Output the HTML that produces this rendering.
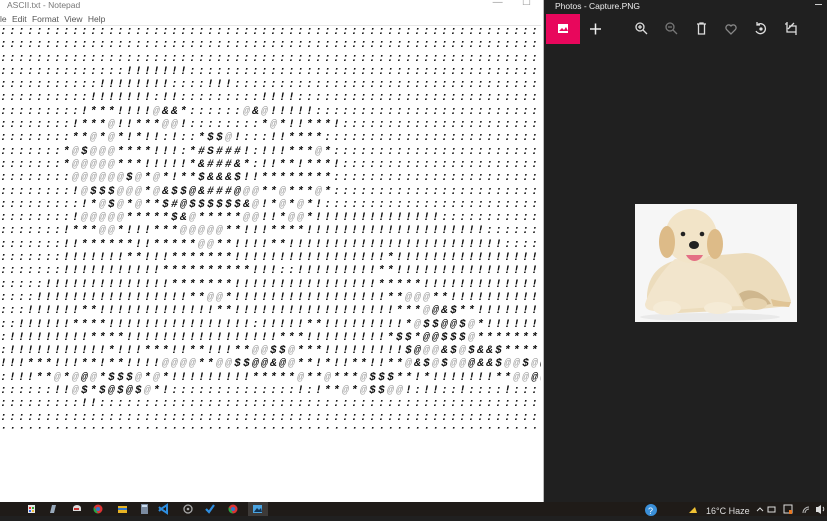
<!DOCTYPE html>
<html><head><meta charset="utf-8"><style>
*{margin:0;padding:0;box-sizing:border-box}
body{width:827px;height:516px;overflow:hidden;background:#202020;position:relative;font-family:"Liberation Sans",sans-serif}
#np{position:absolute;left:0;top:0;width:544px;height:502px;background:#fff;border-right:1px solid #bbb}
#np .t{position:absolute;left:7px;top:0;font-size:8.5px;color:#777}
#np .t2{position:absolute;right:12px;top:-3px;font-size:10px;color:#999}
#np .m{position:absolute;left:0;top:14px;font-size:8.5px;color:#555;word-spacing:3px}
#np .sep{position:absolute;left:0;top:25px;width:541px;height:1px;background:#e6e6e6}
pre{position:absolute;left:0;top:26px;width:541px;height:404px;overflow:hidden;font-family:"Liberation Mono",monospace;font-weight:bold;font-style:italic;font-size:11px;letter-spacing:2.4px;line-height:13.3px;color:#111}
pre b{color:#aaa;font-weight:bold}
#ph{position:absolute;left:545px;top:0;width:282px;height:502px;background:#202020}
#ph .t{position:absolute;left:10px;top:1px;font-size:8.5px;color:#eee}
#ph .dash{position:absolute;right:5px;top:4px;width:7px;height:1px;background:#ccc}
#pink{position:absolute;left:1px;top:14px;width:34px;height:30px;background:#e8075c}
#tb{position:absolute;left:0;top:502px;width:827px;height:14px;background:#1f1b18}
</style></head><body>
<div id="np">
<div class="t">ASCII.txt - Notepad</div>
<div class="t2">—&nbsp;&nbsp;&nbsp;&nbsp;&nbsp;&nbsp;&nbsp;☐</div>
<div class="m">le Edit Format View Help</div>
<div class="sep"></div>
<pre>:::::::::::::::::::::::::::::::::::::::::::::::::::::::::::::
:::::::::::::::::::::::::::::::::::::::::::::::::::::::::::::
:::::::::::::::::::::::::::::::::::::::::::::::::::::::::::::
::::::::::::::!!!!!!!::::::::::::::::::::::::::::::::::::::::
:::::::::::!!!!!!!!::::!!!:::::::::::::::::::::::::::::::::::
::::::::::!!!!!!!:!!:::::::::!!!!::::::::::::::::::::::::::::
:::::::::!***!!!!<b>@</b>&amp;&amp;*::::::<b>@</b>&amp;<b>@</b>!!!!!::::::::::::::::::::::::::
::::::::!***<b>@</b>!!***<b>@@</b>!::::::::*<b>@</b>*!!***!:::::::::::::::::::::::
::::::::**<b>@</b>*<b>@</b>*!*!!:!::*$$<b>@</b>!:::!!****:::::::::::::::::::::::::
:::::::*<b>@</b>$<b>@@@</b>****!!!:*#S###!:!!!***<b>@</b>*::::::::::::::::::::::::
:::::::*<b>@@@@@</b>***!!!!!*&amp;###&amp;*:!!**!***!:::::::::::::::::::::::
::::::::<b>@@@@@@</b>$<b>@</b>*<b>@</b>*!**$&amp;&amp;&amp;$!!********:::::::::::::::::::::::
::::::::!<b>@</b>$$$<b>@@@</b>*<b>@</b>&amp;$$@&amp;###@<b>@@</b>**<b>@</b>***<b>@</b>*::::::::::::::::::::::::
:::::::::!*<b>@</b>$<b>@</b>*<b>@</b>**$#@$$$$$$&amp;<b>@</b>!*<b>@</b>*<b>@</b>*!::::::::::::::::::::::::::
::::::::!<b>@@@@@</b>*****$&amp;<b>@</b>*****<b>@@</b>!!*<b>@@</b>*!!!!!!!!!!!!!!:::::::::::::::::
:::::::!***<b>@@</b>*!!!***<b>@@@@@</b>**!!!****!!!!!!!!!!!!!!!!!!!!::::::::::::::
:::::::!!******!!*****<b>@@</b>**!!!!**!!!!!!!!!!!!!!!!!!!!!!!!::::::::::::::::::
:::::::!!!!!!!**!!!*******!!!!!!!!!!!!!!!!!*!!!!!!!!!!!!!!!!!!:::::::::::::::::
:::::::!!!!!!!!!!!**********!!!::!!!!!!!!!**!!!!!!!!!!!!!!!!!!::::::::::::::
:::::!!!!!!!!!!!!!!*******!!!!!!!!!!!!!!!!*****!!!!!!!!!!!!!!!!!:::::::::::::
::::!!!!!!!!!!!!!!!!!**<b>@@</b>*!!!!!!!!!!!!!!!!!**<b>@@@</b>**!!!!!!!!!!!!!!!!!::::::::::
:::!!!!!!**!!!!!!!!!!!!!**!!!!!!!!!!!!!!!!!!***<b>@</b>@&amp;$**!!!!!!!!!**!!!!!!::::::::::
::!!!!!!****!!!!!!!!!!!!!!!!:!!!!!**!!!!!!!!!*<b>@</b>$$@@$<b>@</b>*!!!!!!*********!:::::::::
:!!!!!!!!!****!!!!!!!!!!!!!!!!!***!!!!!!!!!*$$*@@$$$<b>@</b>*******!!*****!:::::::
:!!!!!!!!!!!*!!!***!!**!!!**<b>@@</b>$$<b>@</b>***!!!!!!!!!$@<b>@@</b>&amp;$<b>@</b>$&amp;&amp;$*********<b>@</b>$<b>@</b>**:::::
!!!***!!!**!**!!!!<b>@@@@</b>**<b>@@</b>$$@@&amp;@<b>@</b>**!*!!**!!**<b>@</b>&amp;$<b>@</b>$<b>@@</b>@&amp;&amp;$<b>@@</b>$<b>@</b>@$@<b>@</b>$@$<b>@@</b>******!::
:!!!**<b>@</b>*<b>@</b>@<b>@</b>*$$$<b>@</b>*<b>@</b>*!!!!!!!!!*****<b>@</b>**<b>@</b>***<b>@</b>$$$**!*!!!!!!!**<b>@@</b>@<b>@</b>$<b>@@@</b>*************<b>@@@</b>**::
::::::!!<b>@</b>$*$@$@$<b>@</b>*!::::::::::::::!:!**<b>@</b>*<b>@</b>$$<b>@@</b>!:!!::!::::!:::!!!!!!::::::::::
:::::::::!!::::::::::::::::::::::::::::::::::::::::::::::::::
:::::::::::::::::::::::::::::::::::::::::::::::::::::::::::::
:::::::::::::::::::::::::::::::::::::::::::::::::::::::::::::</pre>
</div>
<div id="ph">
<div class="t">Photos - Capture.PNG</div>
<div class="dash"></div>
<div id="pink"><svg width="34" height="30"><rect x="12" y="10" width="10" height="9" fill="#fff"/><path d="M13 17l3-3 2 2 2-3 2 4z" fill="#e8075c"/></svg></div>
<svg style="position:absolute;left:0;top:14px" width="282" height="30" stroke="#ddd" fill="none" stroke-width="1.3">
<path d="M45 15h11M50.5 9.5v11" stroke="#eee" stroke-width="1.5"/>
<circle cx="95" cy="13" r="4"/><path d="M98 16l4 4M93 13h4M95 11v4"/>
<g stroke="#777"><circle cx="125" cy="13" r="4"/><path d="M128 16l4 4M123 13h4"/></g>
<path d="M152 10h9M155 10v-1h3v1M153.5 10v10h6v-10"/>
<path stroke="#888" d="M186 20l-4.5-4.5a2.6 2.6 0 0 1 4.5-3.5a2.6 2.6 0 0 1 4.5 3.5z"/>
<path d="M212 11a5 5 0 1 1-1 6M212 8v3h3"/><circle cx="216" cy="15" r="1" fill="#ddd"/>
<path d="M242 8v10h9M244 12h7v9M240 10h2M249 9l-6 6"/>
</svg>
<svg style="position:absolute;left:90px;top:204px" width="162" height="118" viewBox="0 0 162 118">
<rect width="162" height="118" fill="#f6f6f6"/>
<ellipse cx="75" cy="113" rx="70" ry="4" fill="#e9e9e9"/>
<path d="M12 95c0-30 20-40 48-42l50-4c22 0 38 20 46 48l-2 5-30 3-40 2-40 2c-20 0-32 0-32-14z" fill="#ecdcbc"/>
<path d="M40 55c-12 10-25 30-30 45 0 8 10 8 28 6l40-3 30-1c-8-20-20-45-68-47z" fill="#f2e5cc"/>
<path d="M104 90c10-8 25-2 32 10l-25 4z" fill="#cfb78e"/>
<path d="M136 95c8 2 14 3 20 3l-2 5-16-1z" fill="#e0c495"/>
<ellipse cx="56" cy="32" rx="26" ry="27" fill="#f2e4c8"/>
<ellipse cx="32" cy="38" rx="8" ry="16" fill="#ddbb88"/>
<ellipse cx="80" cy="40" rx="8" ry="15" fill="#ddbb88"/>
<circle cx="48" cy="30" r="2.3" fill="#222"/><circle cx="67" cy="30" r="2.3" fill="#222"/>
<ellipse cx="59" cy="41" rx="5" ry="4" fill="#222"/>
<path d="M51 51c4 8 13 8 17 0z" fill="#e46f85"/>
<ellipse cx="32" cy="104" rx="14" ry="7" fill="#f5ebd6"/>
<ellipse cx="83" cy="104" rx="14" ry="6" fill="#f5ebd6"/>
<ellipse cx="120" cy="100" rx="12" ry="6" fill="#e6d2ad"/>
</svg>
</div>
<div id="tb">
<svg width="827" height="14">
<rect x="248" y="0" width="20" height="14" fill="#3d3a38"/>
<rect x="28" y="3" width="7" height="8" fill="#e6e6e6"/><rect x="29" y="5" width="2" height="2" fill="#e33"/><rect x="32" y="5" width="2" height="2" fill="#3a3"/><rect x="29" y="8" width="2" height="2" fill="#36e"/><rect x="32" y="8" width="2" height="2" fill="#eb3"/>
<path d="M50 11l2-8h4l-2 8z" fill="#9ab"/>
<path d="M73 6a4 3 0 0 1 8 0v3h-8z" fill="#ddd"/><rect x="74" y="6" width="5" height="2" fill="#c33"/>
<circle cx="98" cy="7" r="4.5" fill="#d33"/><circle cx="98" cy="7" r="2" fill="#37c"/><path d="M98 11.5a4.5 4.5 0 0 1-4-6.5l2 3" fill="#2a4"/>
<rect x="118" y="4" width="9" height="7" fill="#e8b423"/><rect x="118" y="6" width="9" height="2" fill="#3576c8"/>
<rect x="141" y="2" width="7" height="10" fill="#7a8aa0"/><rect x="142" y="3" width="5" height="2" fill="#cde"/>
<path d="M161 7l6-4v8zM161 7l-2-2M161 7l-2 2" stroke="#2e8ee0" stroke-width="2" fill="none"/>
<circle cx="188" cy="7" r="4" fill="none" stroke="#aaa" stroke-width="1.3"/><circle cx="188" cy="7" r="1.3" fill="#aaa"/>
<path d="M206 7l3 3 5-7" stroke="#2e8ee0" stroke-width="2.2" fill="none"/>
<circle cx="233" cy="7" r="4.5" fill="#d33"/><circle cx="233" cy="7" r="2" fill="#37c"/><path d="M233 11.5a4.5 4.5 0 0 1-4-6.5l2 3" fill="#2a4"/>
<rect x="253" y="3" width="9" height="8" fill="#4aa3e0"/><path d="M254 10l3-4 2 2 2-2 1 4z" fill="#135"/>
<circle cx="651" cy="8" r="6" fill="#3a8fd8"/><text x="648" y="12" font-size="9" fill="#fff" font-family="Liberation Sans">?</text>
<path d="M689 11h8l-2-6-2 2z" fill="#f1c233"/>
<text x="706" y="12" font-size="9" fill="#ddd" font-family="Liberation Sans">16°C  Haze</text>
<path d="M757 9l3-3 3 3" stroke="#ddd" fill="none"/>
<rect x="768" y="5" width="7" height="5" fill="none" stroke="#ddd"/>
<rect x="784" y="3" width="8" height="8" fill="none" stroke="#ddd"/><rect x="789" y="8" width="3" height="4" fill="#e87722"/>
<path d="M803 11a6 6 0 0 1 6-6M805 11a4 4 0 0 1 4-4" stroke="#bbb" fill="none"/>
<path d="M816 5h2l3-2v9l-3-2h-2z" fill="#ddd"/><path d="M823 5a3 3 0 0 1 0 4" stroke="#ddd" fill="none"/>
</svg>
</div>
</body></html>
